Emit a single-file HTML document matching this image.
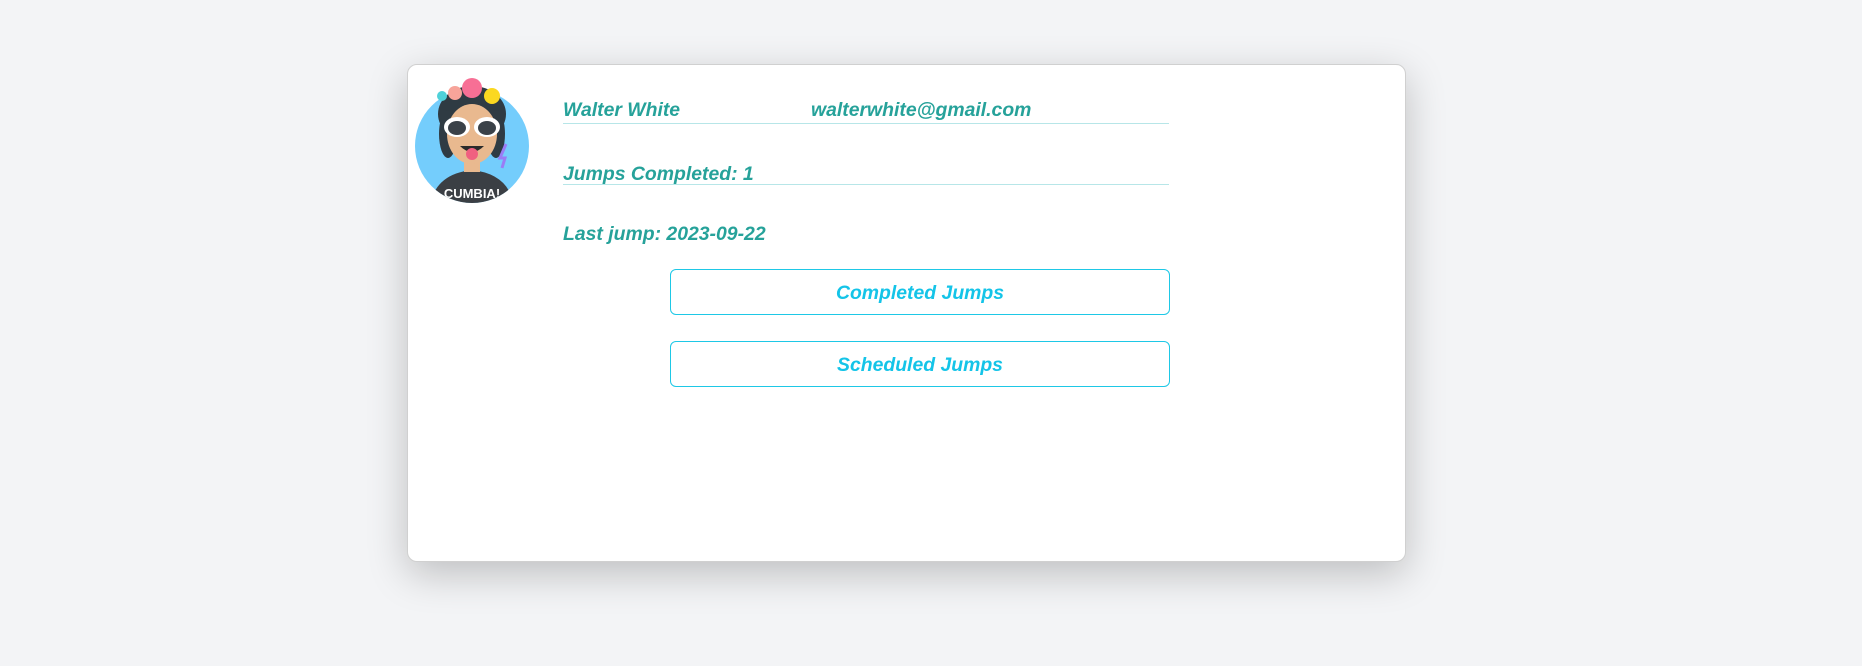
<!DOCTYPE html>
<html><head><style>
body{margin:0;width:1862px;height:666px;background:#f3f4f6;font-family:"Liberation Sans",sans-serif;position:relative;overflow:hidden}
.card{position:absolute;left:407px;top:64px;width:999px;height:498px;background:#fff;border-radius:10px;border:1px solid #d0d0d0;box-sizing:border-box;box-shadow:0 12px 40px rgba(0,0,0,.22)}
.t{position:absolute;color:#26a29a;font-style:italic;font-weight:bold;font-size:19.4px;white-space:nowrap}
.ln{position:absolute;left:563px;width:606px;height:1px;background:#b7e6e8}
.btn{position:absolute;left:670px;width:500px;height:46px;border:1px solid #1ec8e6;border-radius:6px;box-sizing:border-box;color:#14c4e8;font-style:italic;font-weight:bold;font-size:19.4px;text-align:center;line-height:46px}
</style></head><body>
<div class="card"></div>
<svg style="position:absolute;left:410px;top:74px" width="125" height="132" viewBox="0 0 125 132">
<defs><clipPath id="c"><circle cx="62" cy="72" r="57"/></clipPath></defs>
<circle cx="62" cy="72" r="57" fill="#74cdfc"/>
<g clip-path="url(#c)">
<path d="M20 132 Q25 100 62 96 Q99 100 104 132Z" fill="#3b3f44"/>
<rect x="54" y="82" width="16" height="16" fill="#e9b98f"/>
<text x="62" y="124" font-size="13" fill="#fff" text-anchor="middle" font-weight="bold">CUMBIA!</text>
</g>
<ellipse cx="62" cy="40" rx="34" ry="28" fill="#2f3b43"/>
<ellipse cx="38" cy="60" rx="9" ry="24" fill="#2f3b43"/>
<ellipse cx="86" cy="60" rx="9" ry="24" fill="#2f3b43"/>
<ellipse cx="62" cy="60" rx="25" ry="30" fill="#e9b98f"/>
<ellipse cx="47" cy="53" rx="13" ry="10" fill="#fff"/><ellipse cx="77" cy="53" rx="13" ry="10" fill="#fff"/>
<ellipse cx="47" cy="54" rx="9" ry="7" fill="#3a4148"/><ellipse cx="77" cy="54" rx="9" ry="7" fill="#3a4148"/>
<path d="M50 72 Q62 84 74 72Z" fill="#2b2b2b"/><ellipse cx="62" cy="80" rx="6" ry="6" fill="#f06080"/>
<circle cx="62" cy="14" r="10" fill="#f76f95"/><circle cx="45" cy="19" r="7" fill="#f7a49a"/><circle cx="82" cy="22" r="8" fill="#fbd820"/><circle cx="32" cy="22" r="5" fill="#4fd1d9"/>
<path d="M96 70 L90 84 L95 84 L92 94" stroke="#9a7cf5" stroke-width="3" fill="none"/>
</svg>
<div class="t" style="left:563px;top:99px">Walter White</div>
<div class="t" style="left:811px;top:99px">walterwhite@gmail.com</div>
<div class="ln" style="top:123px"></div>
<div class="t" style="left:563px;top:163px">Jumps Completed: 1</div>
<div class="ln" style="top:184px"></div>
<div class="t" style="left:563px;top:223px">Last jump: 2023-09-22</div>
<div class="btn" style="top:269px">Completed Jumps</div>
<div class="btn" style="top:341px">Scheduled Jumps</div>
</body></html>
